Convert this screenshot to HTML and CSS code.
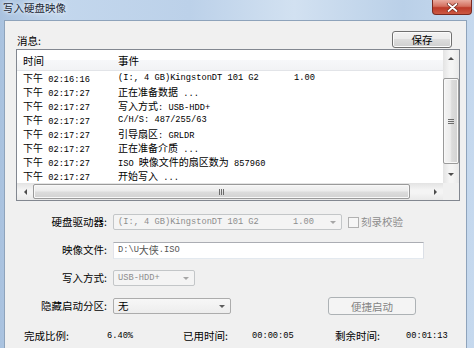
FILE: index.html
```html
<!DOCTYPE html>
<html lang="zh-CN">
<head>
    <meta charset="UTF-8">
    <meta name="viewport" content="width=device-width, initial-scale=1.0">
    <title>写入硬盘映像</title>
    <link rel="stylesheet" href="styles.css">
</head>
<body>
    <!-- 标题栏 -->
    <div class="titlebar">
        <span class="title">写入硬盘映像</span>
        <span class="close">
            <svg width="13" height="9" viewBox="0 0 13 9">
                <path d="M2.5 1 L10.5 8 M10.5 1 L2.5 8" stroke="#6a2418" stroke-width="3.2" stroke-linecap="round"/>
                <path d="M2.5 1 L10.5 8 M10.5 1 L2.5 8" stroke="#ffffff" stroke-width="1.8" stroke-linecap="round"/>
            </svg>
        </span>
    </div>

    <div class="client">
        <!-- 消息 -->
        <div class="msg-row">
            <span class="msg-label">消息:</span>
            <button class="btn">保存</button>
        </div>

        <div class="listview">
            <div class="lv-body">
                <div class="lv-header">
                    <span class="col-time">时间</span>
                    <span class="col-event">事件</span>
                </div>
                <div class="lv-row">
                    <span class="col-time"><span class="zh">下午</span> 02:16:16</span>
                    <span class="col-event"><span class="dev">(I:, 4 GB)KingstonDT 101 G2</span>1.00</span>
                </div>
                <div class="lv-row">
                    <span class="col-time"><span class="zh">下午</span> 02:17:27</span>
                    <span class="col-event"><span class="zh">正在准备数据</span> ...</span>
                </div>
                <div class="lv-row">
                    <span class="col-time"><span class="zh">下午</span> 02:17:27</span>
                    <span class="col-event"><span class="zh">写入方式</span>: USB-HDD+</span>
                </div>
                <div class="lv-row">
                    <span class="col-time"><span class="zh">下午</span> 02:17:27</span>
                    <span class="col-event">C/H/S: 487/255/63</span>
                </div>
                <div class="lv-row">
                    <span class="col-time"><span class="zh">下午</span> 02:17:27</span>
                    <span class="col-event"><span class="zh">引导扇区</span>: GRLDR</span>
                </div>
                <div class="lv-row">
                    <span class="col-time"><span class="zh">下午</span> 02:17:27</span>
                    <span class="col-event"><span class="zh">正在准备介质</span> ...</span>
                </div>
                <div class="lv-row">
                    <span class="col-time"><span class="zh">下午</span> 02:17:27</span>
                    <span class="col-event">ISO <span class="zh">映像文件的扇区数为</span> 857960</span>
                </div>
                <div class="lv-row">
                    <span class="col-time"><span class="zh">下午</span> 02:17:27</span>
                    <span class="col-event"><span class="zh">开始写入</span> ...</span>
                </div>
            </div>

            <!-- 滚动条 -->
            <div class="vscroll">
                <div class="sb-btn"><span class="tri-up"></span></div>
                <div class="vtrack"><div class="vthumb"><span class="grip-v"></span></div></div>
                <div class="sb-btn"><span class="tri-down"></span></div>
            </div>
            <div class="hscroll">
                <div class="sb-btn"><span class="tri-left"></span></div>
                <div class="htrack"><div class="hthumb"><span class="grip-h"></span></div></div>
                <div class="sb-btn"><span class="tri-right"></span></div>
            </div>
            <div class="corner"></div>
        </div>

        <!-- 选项 -->
        <div class="form">
            <span class="form-label">硬盘驱动器:</span>
            <div class="field">
                <div class="combo disabled w-drive">
                    <span class="mono"><span class="dev2">(I:, 4 GB)KingstonDT 101 G2</span>1.00</span>
                    <span class="arrow"></span>
                </div>
                <span class="check"></span>
                <span class="check-label">刻录校验</span>
            </div>

            <span class="form-label">映像文件:</span>
            <div class="field">
                <div class="textbox"><span class="mono">D:\U</span><span class="zh">大侠</span><span class="mono">.ISO</span></div>
            </div>

            <span class="form-label">写入方式:</span>
            <div class="field">
                <div class="combo disabled w-mode">
                    <span class="mono">USB-HDD+</span>
                    <span class="arrow"></span>
                </div>
            </div>

            <span class="form-label">隐藏启动分区:</span>
            <div class="field">
                <div class="combo w-hide">
                    <span>无</span>
                    <span class="arrow"></span>
                </div>
                <button class="btn btn-disabled">便捷启动</button>
            </div>
        </div>

        <!-- 进度 -->
        <div class="status">
            <span>完成比例:</span>
            <span class="mono">6.40%</span>
            <span>已用时间:</span>
            <span class="mono">00:00:05</span>
            <span>剩余时间:</span>
            <span class="mono">00:01:13</span>
        </div>
    </div>
</body>
</html>
```

FILE: styles.css
```css
/* 基本样式 */
* {
    box-sizing: border-box;
}

body {
    margin: 0;
    width: 474px;
    height: 348px;
    overflow: hidden;
    background: linear-gradient(to right, #a9c2df 0%, #c3d7ed 12%, #bcd1e9 40%, #d2e1f1 62%, #bad0e8 85%, #c6d9ee 100%);
    font-family: "Noto Sans CJK SC", "Liberation Sans", sans-serif;
    font-size: 10.5px;
    line-height: 12px;
    color: #000;
}

.mono {
    font-family: "Liberation Mono", "Noto Sans CJK SC", monospace;
    font-size: 8.7px;
}

.zh {
    font-family: "Noto Sans CJK SC", sans-serif;
    font-size: 10px;
}

/* 标题栏 */
.titlebar {
    height: 20px;
    display: flex;
    justify-content: space-between;
    align-items: flex-start;
    padding: 0 2px 0 3px;
}

.title {
    font-size: 10.5px;
    line-height: 16px;
    color: #1c2836;
    text-shadow: 0 0 5px #eef4fb, 0 0 3px #eef4fb;
}

.close {
    width: 40px;
    height: 15px;
    border: 1px solid #7a2a20;
    border-top: none;
    border-radius: 0 0 4px 4px;
    background: linear-gradient(#e9ab9f, #d4705f 45%, #bd3a29 55%, #cc5a44);
    display: flex;
    align-items: center;
    justify-content: center;
}

/* 客户区 */
.client {
    margin-left: 4px;
    width: 463px;
    height: 328px;
    background: #f0f0f0;
    border: 1px solid #8ea3bb;
    border-bottom: none;
}

.msg-row {
    display: flex;
    justify-content: space-between;
    align-items: flex-end;
    height: 27px;
    padding: 10px 14px 0 12px;
}

.msg-label {
    margin-bottom: 1px;
}

.btn {
    width: 60px;
    height: 17px;
    padding: 0;
    font-family: "Noto Sans CJK SC", sans-serif;
    font-size: 10.5px;
    line-height: 15px;
    color: #000;
    border: 1px solid #707070;
    border-radius: 3px;
    background: linear-gradient(#f2f2f2, #ebebeb 50%, #dddddd 50%, #cfcfcf);
    box-shadow: inset 0 0 0 1px #fbfbfb;
}

.btn-disabled {
    width: 88px;
    height: 18px;
    margin-left: 97px;
    color: #838383;
    border-color: #adb2b5;
    background: #f4f4f4;
    box-shadow: none;
}

/* 列表 */
.listview {
    margin: 1px 0 0 11px;
    width: 444px;
    height: 152px;
    border: 1px solid #828790;
    background: #fff;
    display: grid;
    grid-template-columns: 426px 16px;
    grid-template-rows: 133px 17px;
}

.lv-body {
    overflow: hidden;
}

.lv-header {
    display: flex;
    align-items: center;
    height: 21px;
    padding-top: 2px;
    background: linear-gradient(#ffffff, #ffffff 50%, #f7f8fa 50%, #f2f3f5);
    border-bottom: 1px solid #e2e4e8;
    font-size: 10.5px;
}

.col-time {
    width: 101px;
    padding-left: 6px;
    flex-shrink: 0;
}

.lv-row {
    display: flex;
    height: 14px;
    line-height: 14px;
    white-space: nowrap;
    font-family: "Liberation Mono", "Noto Sans CJK SC", monospace;
    font-size: 8.7px;
    color: #000;
}

.dev {
    display: inline-block;
    width: 176px;
}

/* 滚动条 */
.vscroll {
    display: flex;
    flex-direction: column;
    background: linear-gradient(to right, #e3e3e3, #f4f4f4 40%, #f4f4f4 60%, #e9e9e9);
}

.hscroll {
    display: flex;
    background: linear-gradient(#e3e3e3, #f4f4f4 40%, #f4f4f4 60%, #e9e9e9);
}

.corner {
    background: #f0f0f0;
}

.sb-btn {
    flex: 0 0 16px;
    display: flex;
    align-items: center;
    justify-content: center;
}

.vscroll .sb-btn {
    flex-basis: 17px;
}

.vtrack {
    flex: 1;
    padding: 11px 0 2px;
    display: flex;
}

.vthumb {
    flex: 1;
    border: 1px solid #9a9a9a;
    border-radius: 2px;
    background: linear-gradient(to right, #f4f4f4, #ececec 45%, #dcdcdc 55%, #d2d2d2);
    box-shadow: inset 0 0 0 1px #f8f8f8;
    display: flex;
    align-items: center;
    justify-content: center;
}

.htrack {
    flex: 1;
    padding-right: 17px;
    display: flex;
}

.hthumb {
    flex: 1;
    margin: 1px 0;
    border: 1px solid #9a9a9a;
    border-radius: 2px;
    background: linear-gradient(#f4f4f4, #ececec 45%, #dcdcdc 55%, #d2d2d2);
    box-shadow: inset 0 0 0 1px #f8f8f8;
    display: flex;
    align-items: center;
    justify-content: center;
}

.grip-v {
    width: 6px;
    height: 5px;
    border-top: 1px solid #6c6c6c;
    border-bottom: 1px solid #6c6c6c;
    background: linear-gradient(transparent 1px, #6c6c6c 1px, #6c6c6c 2px, transparent 2px);
}

.grip-h {
    width: 5px;
    height: 6px;
    border-left: 1px solid #6c6c6c;
    border-right: 1px solid #6c6c6c;
    background: linear-gradient(to right, transparent 1px, #6c6c6c 1px, #6c6c6c 2px, transparent 2px);
}

.tri-up,
.tri-down,
.tri-left,
.tri-right {
    width: 0;
    height: 0;
    border: 3px solid transparent;
}

.tri-up {
    border-bottom-color: #4d4d4d;
    border-top-width: 0;
}

.tri-down {
    border-top-color: #4d4d4d;
    border-bottom-width: 0;
}

.tri-left {
    border-right-color: #4d4d4d;
    border-left-width: 0;
}

.tri-right {
    border-left-color: #4d4d4d;
    border-right-width: 0;
}

/* 选项表单 */
.form {
    margin-top: 7px;
    display: grid;
    grid-template-columns: 108px auto;
    grid-auto-rows: 28px;
    align-items: center;
}

.form-label {
    text-align: right;
    padding-right: 6px;
}

.field {
    display: flex;
    align-items: center;
}

.combo {
    height: 16px;
    padding-left: 4px;
    border: 1px solid #acacac;
    border-radius: 2px;
    background: linear-gradient(#f7f7f7, #ededed);
    display: flex;
    align-items: center;
    white-space: nowrap;
}

.combo.disabled {
    color: #8d8d8d;
    border-color: #c3c6c8;
    background: #f4f4f4;
}

.w-drive {
    width: 229px;
}

.w-mode {
    width: 82px;
}

.w-hide {
    width: 118px;
}

.dev2 {
    display: inline-block;
    width: 175px;
}

.arrow {
    margin: 0 5px 0 auto;
    width: 0;
    height: 0;
    border: 3px solid transparent;
    border-bottom-width: 0;
    border-top-color: #5c5c5c;
}

.combo.disabled .arrow {
    border-top-color: #a6a6a6;
}

.check {
    width: 11px;
    height: 11px;
    margin: 0 2px 0 6px;
    border: 1px solid #b1b1b1;
    background: #f6f6f6;
}

.check-label {
    color: #8d8d8d;
}

.textbox {
    width: 311px;
    height: 17px;
    padding-left: 4px;
    border: 1px solid;
    border-color: #abadb3 #dbdfe6 #e3e9ef #e2e3ea;
    background: #fff;
    color: #555;
    display: flex;
    align-items: center;
}

/* 进度 */
.status {
    display: grid;
    grid-template-columns: 83px 76px 69px 83px 71px auto;
    padding: 10px 0 0 19px;
    line-height: 12px;
}
```
